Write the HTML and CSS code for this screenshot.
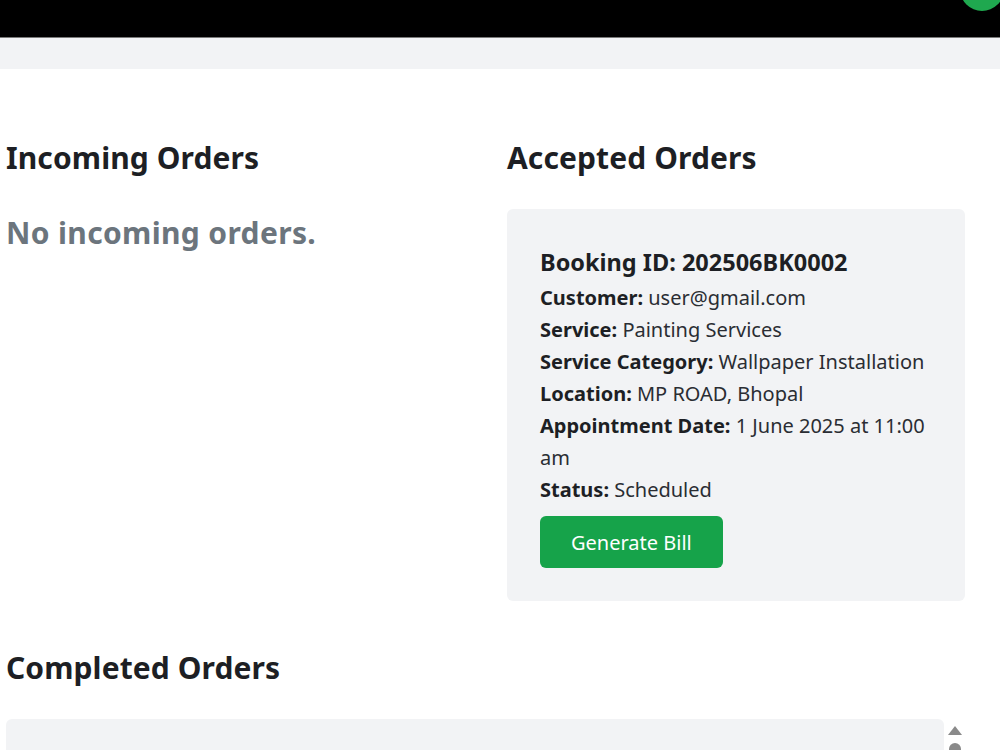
FILE: index.html
```html
<!DOCTYPE html>
<html lang="en">
<head>
<meta charset="utf-8">
<title>Orders</title>
<link rel="stylesheet" href="styles.css">
</head>
<body>
<header class="topbar">
  <span class="avatar"></span>
</header>
<div class="subbar"></div>
<main class="page">
  <div class="columns">
    <section class="col">
      <h2 class="section-title">Incoming Orders</h2>
      <p class="empty">No incoming orders.</p>
    </section>
    <section class="col">
      <h2 class="section-title">Accepted Orders</h2>
      <div class="card">
        <h3 class="card-title">Booking ID: 202506BK0002</h3>
        <p class="line"><b>Customer:</b> user@gmail.com</p>
        <p class="line"><b>Service:</b> Painting Services</p>
        <p class="line"><b>Service Category:</b> Wallpaper Installation</p>
        <p class="line"><b>Location:</b> MP ROAD, Bhopal</p>
        <p class="line"><b>Appointment Date:</b> 1 June 2025 at 11:00 am</p>
        <p class="line"><b>Status:</b> Scheduled</p>
        <button class="btn">Generate Bill</button>
      </div>
    </section>
  </div>
  <section class="completed">
    <h2 class="section-title">Completed Orders</h2>
    <div class="scroll-box">
      <div class="card wide"></div>
      <div class="scrollbar">
        <span class="arrow-up"></span>
        <span class="thumb"></span>
      </div>
    </div>
  </section>
</main>
</body>
</html>
```

FILE: styles.css
```css
* { box-sizing: border-box; }
html, body { margin: 0; padding: 0; }
body {
  font-family: "Noto Sans", "Open Sans", sans-serif;
  color: #212529;
  background: #ffffff;
  overflow: hidden;
  width: 1000px;
  height: 750px;
}
.topbar {
  height: 38px;
  background: #000000;
  border-bottom: 1px solid #7a7a7a;
  position: relative;
  overflow: hidden;
}
.avatar {
  position: absolute;
  width: 44px;
  height: 44px;
  border-radius: 50%;
  background: #1fa84f;
  right: -4px;
  top: -33px;
}
.subbar {
  height: 31px;
  background: #f2f3f5;
}
.page {
  padding: 71px 35px 0 6px;
}
.columns {
  display: grid;
  grid-template-columns: 459px 458px;
  column-gap: 42px;
}
.section-title {
  margin: 0;
  font-size: 30px;
  line-height: 36px;
  font-weight: 700;
  color: #1d1f24;
  letter-spacing: 0.1px;
}
.empty {
  margin: 39px 0 0;
  font-size: 30px;
  line-height: 36px;
  font-weight: 700;
  color: #6c757d;
  letter-spacing: 0.35px;
}
.card {
  margin-top: 33px;
  background: #f2f3f5;
  border-radius: 6px;
  padding: 37px 32px 33px 33px;
}
.card-title {
  margin: 0 0 4px;
  font-size: 23.5px;
  line-height: 32px;
  font-weight: 700;
  color: #1d1f24;
}
.line {
  margin: 0;
  font-size: 20px;
  line-height: 32px;
  color: #2a2d33;
}
.line b { color: #1d1f24; }
.btn {
  margin-top: 10px;
  display: inline-block;
  height: 52px;
  padding: 0 31px;
  border: none;
  border-radius: 6px;
  background: #16a34a;
  color: #ffffff;
  font-family: inherit;
  font-size: 20px;
}
.completed {
  margin-top: 49px;
}
.scroll-box {
  margin-top: 33px;
  display: flex;
}
.card.wide {
  margin-top: 0;
  flex: 1;
  height: 120px;
  padding: 0;
}
.scrollbar {
  width: 21px;
  display: flex;
  flex-direction: column;
  align-items: center;
  padding-top: 7px;
}
.arrow-up {
  width: 0;
  height: 0;
  border-left: 7px solid transparent;
  border-right: 7px solid transparent;
  border-bottom: 9px solid #8a8a8a;
}
.thumb {
  margin-top: 8px;
  width: 12px;
  height: 60px;
  border-radius: 6px;
  background: #8a8a8a;
}
```
